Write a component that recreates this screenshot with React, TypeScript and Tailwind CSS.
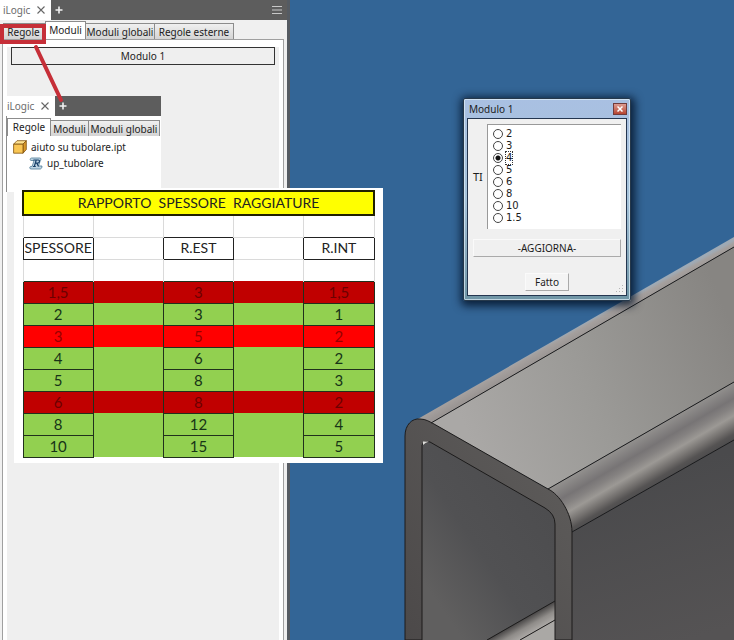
import React, { useState } from 'react';

interface Row {
  values: [string, string, string];
  tone: 'green' | 'red' | 'dark';
}

const rows: Row[] = [
  { values: ['1,5', '3', '1,5'], tone: 'dark' },
  { values: ['2', '3', '1'], tone: 'green' },
  { values: ['3', '5', '2'], tone: 'red' },
  { values: ['4', '6', '2'], tone: 'green' },
  { values: ['5', '8', '3'], tone: 'green' },
  { values: ['6', '8', '2'], tone: 'dark' },
  { values: ['8', '12', '4'], tone: 'green' },
  { values: ['10', '15', '5'], tone: 'green' },
];

const toneClasses = {
  green: 'bg-[#92d050] text-[#173417]',
  red: 'bg-[#ff0000] text-[#980000]',
  dark: 'bg-[#c00000] text-[#6c0000]',
};

const thicknesses = ['2', '3', '4', '5', '6', '8', '10', '1.5'];

const TitleBar: React.FC<{ menu?: boolean }> = ({ menu = false }) => (
  <div className="flex h-5 items-stretch bg-[#5d5d5d] text-[#f2f2f2]">
    <div
      className={
        'flex items-center justify-between bg-white pr-1.5 text-[#6c6c6c] ' +
        (menu ? 'w-[51px] pl-[3px]' : 'w-[49px] pl-px')
      }
    >
      <span>iLogic</span>
      <button type="button" aria-label="Chiudi">
        <svg width="8" height="8" viewBox="0 0 8 8" stroke="#666" strokeWidth="1.1">
          <path d="M.5.5l7 7M7.5.5l-7 7" />
        </svg>
      </button>
    </div>
    <button type="button" aria-label="Aggiungi" className="ml-1 flex items-center">
      <svg width="8" height="8" viewBox="0 0 8 8" stroke="currentColor" strokeWidth="1.6">
        <path d="M4 .5v7M.5 4h7" />
      </svg>
    </button>
    {menu && (
      <button type="button" aria-label="Menu" className="mr-[5px] ml-auto">
        <svg width="10" height="8" viewBox="0 0 10 8" stroke="#c8c8c8" strokeWidth="1">
          <path d="M0 .5h10M0 4h10M0 7.5h10" />
        </svg>
      </button>
    )}
  </div>
);

interface TabProps {
  label: string;
  active?: boolean;
  className: string;
}

const Tab: React.FC<TabProps> = ({ label, active = false, className }) => (
  <button
    type="button"
    role="tab"
    aria-selected={active}
    className={
      (active
        ? 'h-[18px] border-x border-t border-[#8c8c8c] bg-white pb-px '
        : 'h-4 border-t border-r border-[#8c8c8c] bg-linear-to-b from-[#f0f0f0] to-[#d4d4d4] ') + className
    }
  >
    {label}
  </button>
);

const CubeIcon: React.FC = () => (
  <svg width="14" height="14" viewBox="0 0 14 14" stroke="#80500d" strokeWidth=".8" strokeLinejoin="round">
    <path d="M.6 4.2L4 .7h9.3L10 4.2z" fill="#ffe391" />
    <path d="M10 4.2L13.3.7v8.8L10 13.2z" fill="#d9992c" />
    <path d="M.6 4.2H10v9H.6z" fill="#f9c654" />
  </svg>
);

const RuleIcon: React.FC = () => (
  <svg width="14" height="13" viewBox="0 0 14 13" fill="none">
    <path d="M2.5 1h8.2c2 0 1.3 2 .3 3.5L9.5 9H13c0 2-.8 3-2 3H2c-1.6 0-1.5-2-.5-2.6h1.7L5 3.5H2C.8 3.5.9 1 2.5 1z" fill="#bed5e4" stroke="#4d7894" strokeWidth=".8" />
    <path d="M5.3 9.5L7.2 3h2c1.9 0 1.6 3-.5 3.2H6.5M8 6.4l1.5 3.1M4.4 3h3M4 9.5h2.8" stroke="#173f68" strokeWidth="1.2" />
  </svg>
);

const TubeModel: React.FC = () => (
  <svg className="absolute inset-0 h-full w-full" viewBox="290 0 444 640" preserveAspectRatio="xMidYMid slice" aria-hidden="true">
    <defs>
      <linearGradient id="top" gradientUnits="userSpaceOnUse" x1="470" y1="440" x2="734" y2="330">
        <stop offset="0" stopColor="#aaa8a6" />
        <stop offset=".45" stopColor="#9b9a97" />
        <stop offset="1" stopColor="#878582" />
      </linearGradient>
      <linearGradient id="bend" gradientUnits="userSpaceOnUse" x1="650" y1="431" x2="675" y2="474">
        <stop offset="0" stopColor="#918f8d" />
        <stop offset=".28" stopColor="#777475" />
        <stop offset=".42" stopColor="#858281" />
        <stop offset=".58" stopColor="#9c9995" />
        <stop offset=".78" stopColor="#716e6c" />
        <stop offset=".9" stopColor="#555353" />
        <stop offset="1" stopColor="#4d4c4d" />
      </linearGradient>
      <linearGradient id="edge" gradientUnits="userSpaceOnUse" x1="570" y1="331" x2="575" y2="340">
        <stop offset="0" stopColor="#9faab5" />
        <stop offset=".3" stopColor="#a5a09e" />
        <stop offset="1" stopColor="#9a9593" />
      </linearGradient>
      <linearGradient id="inside" gradientUnits="userSpaceOnUse" x1="422" y1="580" x2="540" y2="500">
        <stop offset="0" stopColor="#605f5f" />
        <stop offset=".45" stopColor="#515153" />
        <stop offset="1" stopColor="#4d4d4f" />
      </linearGradient>
      <linearGradient id="front" gradientUnits="userSpaceOnUse" x1="405" y1="640" x2="572" y2="520">
        <stop offset="0" stopColor="#4c4949" />
        <stop offset="1" stopColor="#5b5958" />
      </linearGradient>
      <linearGradient id="side" gradientUnits="userSpaceOnUse" x1="640" y1="480" x2="690" y2="640">
        <stop offset="0" stopColor="#4a4a4c" />
        <stop offset="1" stopColor="#555354" />
      </linearGradient>
      <linearGradient id="innerBend" gradientUnits="userSpaceOnUse" x1="530" y1="615" x2="538" y2="629">
        <stop offset="0" stopColor="#454343" />
        <stop offset=".55" stopColor="#8f8c89" />
        <stop offset="1" stopColor="#aaa7a4" />
      </linearGradient>
    </defs>
    <path d="M572 532L734 440V640H572z" fill="url(#side)" />
    <path d="M416 420L734 237V247L431 423z" fill="url(#edge)" />
    <path d="M431 423L734 247V382L548 489z" fill="url(#top)" />
    <path d="M548 489L734 382V440L572 532z" fill="url(#bend)" />
    <path
      d="M405 640V436C405 425 412 418 420 419C426 419 430 422 434 424L548 489C559 494 572 513 572 532V640z"
      fill="url(#front)"
      stroke="#1c1b1b"
      strokeWidth="1"
    />
    <path d="M422 640V445Q424 440 430 442L545 508Q555 514 555 524V640z" fill="url(#inside)" />
    <path d="M487 640L555 601V620L520 640z" fill="url(#innerBend)" />
    <path d="M520 640L555 620V640z" fill="#aaa8a5" />
    <g fill="none" stroke="#1c1b1b" strokeWidth="1">
      <path d="M422 640V445Q424 440 430 442L545 508Q555 514 555 524V640" />
      <path d="M487 640L555 601M520 640L555 620" />
      <path d="M431 423L734 247M548 489L734 382M572 532L734 440" />
    </g>
    <path d="M423 445V441.500L429 441.500Q425 442.500 423 445z" fill="#deddda" />
  </svg>
);

const RadiusTable: React.FC = () => (
  <div className="absolute top-[188px] left-[14px] bg-white pt-0.5 pr-2 pb-[5px] pl-2 font-[Lato,sans-serif] text-[14px] leading-[18px] text-[#222]">
    <table className="w-[353px] table-fixed border-collapse text-center">
      <thead>
        <tr className="h-6">
          <th colSpan={5} className="border-2 border-[#222200] bg-[#ffff00] p-0 font-normal whitespace-pre">
            {'RAPPORTO  SPESSORE  RAGGIATURE'}
          </th>
        </tr>
        <tr className="h-[22px]">
          {[0, 1, 2, 3, 4].map(i => (
            <td key={i} className="border-x border-[#dadada] p-0" />
          ))}
        </tr>
        <tr className="h-[22px]">
          <th className="border border-[#222] p-0 font-normal">SPESSORE</th>
          <td className="border-y border-y-[#dadada] p-0" />
          <th className="border border-[#222] p-0 font-normal">R.EST</th>
          <td className="border-y border-y-[#dadada] p-0" />
          <th className="border border-[#222] p-0 font-normal">R.INT</th>
        </tr>
        <tr className="h-[22px]">
          {[0, 1, 2, 3, 4].map(i => (
            <td key={i} className="border-x border-[#dadada] p-0" />
          ))}
        </tr>
      </thead>
      <tbody className="text-[15px]">
        {rows.map(({ values, tone }, i) => (
          <tr key={i} className={'h-[22px] ' + toneClasses[tone]}>
            <td className="border border-[#20301c] p-0">{values[0]}</td>
            <td className="p-0" />
            <td className="border border-[#20301c] p-0">{values[1]}</td>
            <td className="p-0" />
            <td className="border border-[#20301c] p-0">{values[2]}</td>
          </tr>
        ))}
      </tbody>
    </table>
  </div>
);

const ModuleDialog: React.FC = () => {
  const [value, setValue] = useState('4');

  return (
    <div
      role="dialog"
      aria-label="Modulo 1"
      className="absolute top-[98px] left-[463px] w-[168px] rounded-xs border border-[#26384a] bg-linear-to-b from-[#a9c0e2] via-[#a5c3da] to-[#6f95a5] px-[3px] pb-1 text-[11px] text-[#1c1c1c] shadow-[inset_0_0_0_1px_rgba(225,240,250,0.7),1px_2px_9px_3px_rgba(0,15,35,0.8)]"
    >
      <div className="flex h-[19px] items-center justify-between pl-0.5">
        <span className="text-[10px]">Modulo 1</span>
        <button
          type="button"
          aria-label="Chiudi"
          className="flex h-3 w-3.5 items-center justify-center border border-[#713b3b] bg-linear-to-b from-[#dc9b91] to-[#b6432f]"
        >
          <svg width="6" height="6" viewBox="0 0 6 6" stroke="#fff" strokeWidth="1.5">
            <path d="M.5.5l5 5M5.5.5l-5 5" />
          </svg>
        </button>
      </div>
      <div className="relative border border-[#243650] bg-[#f0f0f0] px-[5px] pt-[5px] pb-1">
        <div role="radiogroup" aria-labelledby="ti-label" className="flex items-center">
          <span id="ti-label" className="w-3.5">
            TI
          </span>
          <div className="h-[105px] flex-1 border-t border-l border-[#999] bg-white pt-[3px] pl-[5px] font-['DejaVu_Sans',sans-serif] text-[10px]">
            {thicknesses.map(item => (
              <label key={item} className="flex h-3 items-center gap-[3px] leading-3">
                <input
                  type="radio"
                  name="ti"
                  value={item}
                  checked={value === item}
                  onChange={() => setValue(item)}
                  className="h-2.5 w-2.5 appearance-none rounded-full border border-[#444] bg-white checked:bg-[radial-gradient(circle,#111_0_2px,white_3px)]"
                />
                <span className={value === item ? 'outline-1 outline-dotted outline-[#333]' : ''}>{item}</span>
              </label>
            ))}
          </div>
        </div>
        <button type="button" className="mt-2.5 h-[18px] w-full border border-[#fafafa] border-r-[#aaa] border-b-[#aaa] text-[10px]">
          -AGGIORNA-
        </button>
        <div className="mt-4 flex justify-center">
          <button type="button" className="h-[18px] w-11 border border-[#fafafa] border-r-[#aaa] border-b-[#aaa] bg-[#f4f4f4] text-[10px]">
            Fatto
          </button>
        </div>
        <svg className="absolute right-0.5 bottom-0.5" width="8" height="8" viewBox="0 0 8 8" fill="#b5b5b5">
          <path d="M6 0h1v1H6zM3 3h1v1H3zM6 3h1v1H6zM0 6h1v1H0zM3 6h1v1H3zM6 6h1v1H6z" />
        </svg>
      </div>
    </div>
  );
};

const RulesPanel: React.FC = () => (
  <section className="absolute top-24 left-1.5 flex h-24 w-[155px] flex-col overflow-hidden bg-white">
    <TitleBar />
    <div role="tablist" className="flex items-end border-l border-[#8c8c8c] pt-0.5">
      <Tab label="Regole" active className="w-11" />
      <Tab label="Moduli" className="w-[38px]" />
      <Tab label="Moduli globali" className="w-[71px]" />
    </div>
    <div className="flex flex-1 flex-col border-l border-[#8c8c8c] pt-[3px] pl-1.5">
      <div className="flex h-4 items-center gap-1">
        <CubeIcon />
        <span>aiuto su tubolare.ipt</span>
      </div>
      <div className="flex h-4 items-center gap-1 pl-4">
        <RuleIcon />
        <span>up_tubolare</span>
      </div>
    </div>
  </section>
);

const App: React.FC = () => (
  <main className="relative flex min-h-screen overflow-hidden bg-[#336596] font-['Noto_Sans',sans-serif] text-[10px] leading-[14px] whitespace-nowrap text-[#222]">
    <aside className="flex w-[290px] shrink-0 flex-col border-r-3 border-[#555b62] bg-[#f0f0f0]">
      <TitleBar menu />
      <div role="tablist" className="flex items-end pt-px pl-[3px]">
        <Tab label="Regole" className="w-[42px]" />
        <Tab label="Moduli" active className="w-[41px]" />
        <Tab label="Moduli globali" className="w-[69px]" />
        <Tab label="Regole esterne" className="w-[79px]" />
      </div>
      <div className="mr-[3px] ml-0.5 flex flex-1 flex-col border-x border-t border-[#a0a0a0] bg-white px-1 pt-[7px]">
        <div className="flex-1 bg-[#efefef] px-1">
          <button type="button" className="h-[18px] w-full border border-[#333]">
            Modulo 1
          </button>
        </div>
      </div>
    </aside>
    <div className="relative flex-1 overflow-hidden">
      <TubeModel />
    </div>

    <RulesPanel />
    <div className="absolute top-6 left-0 h-5 w-[46px] border-4 border-[#c62f38]" />
    <svg className="absolute top-11 left-8" width="36" height="60" viewBox="0 0 36 60" stroke="#c62f38" strokeWidth="4" strokeLinecap="round">
      <path d="M4 3L29 56" />
    </svg>
    <RadiusTable />
    <ModuleDialog />
  </main>
);

export default App;
